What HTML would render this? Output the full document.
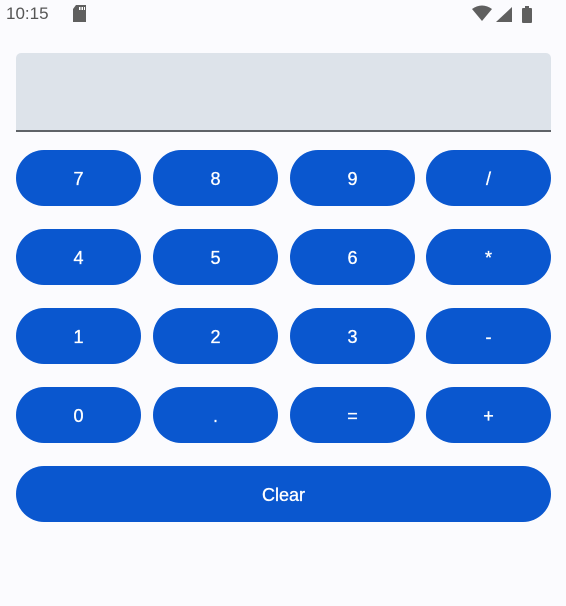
<!DOCTYPE html><html><head><style>
body{margin:0;width:566px;height:606px;background:#fbfbfe;font-family:"Liberation Sans",sans-serif;position:relative;overflow:hidden}
.sb{position:absolute;top:4px;left:6px;font-size:17px;color:#555}
.f{position:absolute;left:16px;top:53px;width:535px;height:77px;background:#dde3ea;border-radius:5px 5px 0 0;border-bottom:2px solid #5f6368}
.b{position:absolute;width:125px;height:56px;border-radius:28px;background:#0a57cf;color:#fff;font-size:18px;display:flex;align-items:center;justify-content:center;padding-top:2px;box-sizing:border-box;-webkit-text-stroke:0.3px #fff}
</style></head><body>
<div class="sb">10:15</div>
<svg style="position:absolute;left:72px;top:5px" width="16" height="18"><path d="M4 0H14V17H1V4Z" fill="#5f5f5f"/><rect x="7" y="2" width="1.5" height="3" fill="#fff"/><rect x="9.5" y="2" width="1.5" height="3" fill="#fff"/><rect x="12" y="2" width="1" height="3" fill="#fff"/></svg>
<svg style="position:absolute;left:472px;top:5px" width="70" height="18"><path d="M0 4Q10 -3 20 4L10 16Z" fill="#5f5f5f"/><path d="M24 17L40 2V17Z" fill="#5f5f5f"/><rect x="50" y="3" width="10" height="15" rx="1" fill="#5f5f5f"/><rect x="53" y="1" width="4" height="3" fill="#5f5f5f"/></svg>
<div class="f"></div>
<div class="b" style="left:16px;top:150px">7</div><div class="b" style="left:153px;top:150px">8</div><div class="b" style="left:290px;top:150px">9</div><div class="b" style="left:426px;top:150px">/</div>
<div class="b" style="left:16px;top:229px">4</div><div class="b" style="left:153px;top:229px">5</div><div class="b" style="left:290px;top:229px">6</div><div class="b" style="left:426px;top:229px">*</div>
<div class="b" style="left:16px;top:308px">1</div><div class="b" style="left:153px;top:308px">2</div><div class="b" style="left:290px;top:308px">3</div><div class="b" style="left:426px;top:308px">-</div>
<div class="b" style="left:16px;top:387px">0</div><div class="b" style="left:153px;top:387px">.</div><div class="b" style="left:290px;top:387px">=</div><div class="b" style="left:426px;top:387px">+</div>
<div class="b" style="left:16px;top:466px;width:535px">Clear</div>
</body></html>
